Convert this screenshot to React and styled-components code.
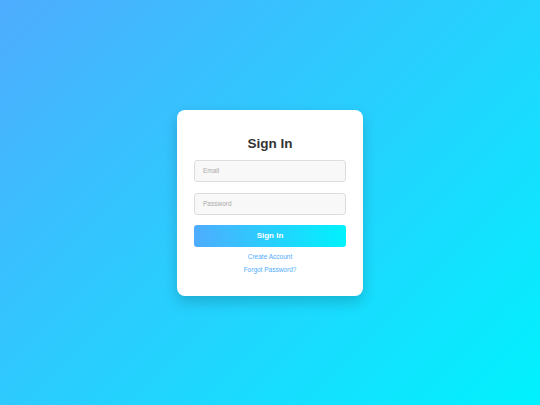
import styled, { createGlobalStyle } from "styled-components";

const GlobalStyle = createGlobalStyle`
  * { box-sizing: border-box; }
  html, body, #root { margin: 0; height: 100%; }
  body { font-family: "Liberation Sans", Arial, sans-serif; }
`;

const Page = styled.main`
  height: 100vh;
  display: flex;
  align-items: center;
  justify-content: center;
  background: linear-gradient(135deg, #4facfe 0%, #00f2fe 100%);
`;

const Card = styled.form`
  width: 186px;
  padding: 26px 17px 22px;
  background: #fff;
  border-radius: 8px;
  box-shadow: 0 6px 14px rgba(0, 0, 0, 0.18);
  display: flex;
  flex-direction: column;
`;

const Title = styled.h2`
  margin: 0 0 8px;
  text-align: center;
  font-size: 13.5px;
  line-height: 16px;
  font-weight: 700;
  color: #333;
`;

const Input = styled.input`
  height: 22px;
  width: 100%;
  margin-bottom: ${(p) => p.$gap || 0}px;
  padding: 0 8px;
  border: 1px solid #ddd;
  border-radius: 3px;
  background: #f8f8f8;
  font-family: inherit;
  font-size: 6.5px;
  outline: none;
  &::placeholder { color: #aaa; }
`;

const Button = styled.button`
  height: 22px;
  margin-top: 10px;
  border: none;
  border-radius: 3px;
  background: linear-gradient(90deg, #4facfe 0%, #00f2fe 100%);
  color: #fff;
  font-family: inherit;
  font-size: 8px;
  font-weight: 700;
  cursor: pointer;
`;

const Links = styled.div`
  margin-top: 5px;
  display: flex;
  flex-direction: column;
  align-items: center;
  gap: 4px;
`;

const Link = styled.a`
  font-size: 6.5px;
  line-height: 9px;
  color: #4facfe;
  text-decoration: none;
`;

export default function App() {
  return (
    <>
      <GlobalStyle />
      <Page>
        <Card onSubmit={(e) => e.preventDefault()}>
          <Title>Sign In</Title>
          <Input type="email" placeholder="Email" $gap={11} />
          <Input type="password" placeholder="Password" />
          <Button type="submit">Sign In</Button>
          <Links>
            <Link href="#">Create Account</Link>
            <Link href="#">Forgot Password?</Link>
          </Links>
        </Card>
      </Page>
    </>
  );
}
